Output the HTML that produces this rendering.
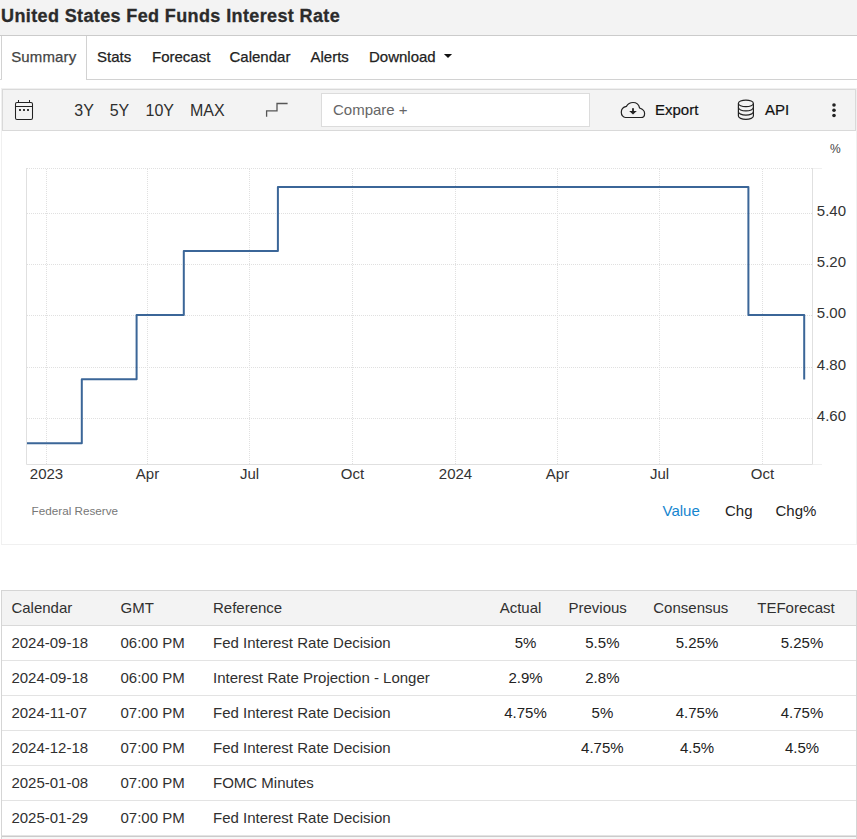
<!DOCTYPE html>
<html><head><meta charset="utf-8">
<style>
html,body{margin:0;padding:0;background:#fff;}
body{width:857px;height:839px;overflow:hidden;position:relative;font-family:"Liberation Sans",sans-serif;color:#222;}
.a{position:absolute;}
.t{position:absolute;white-space:nowrap;line-height:1;}
.f15{font-size:15px;}
.tab{-webkit-text-stroke:0.25px currentColor;}
.f14{font-size:14px;}
.f12{font-size:12px;}
.tb{color:#303030;}
#title{left:0;top:0;width:857px;height:35px;background:#f3f3f3;border-bottom:1px solid #cbcbcb;}
#tabline{left:86px;top:79px;width:771px;height:1px;background:#d2d2d2;}
#tabact{left:1px;top:36px;width:84px;height:43px;border-left:1px solid #d2d2d2;border-right:1px solid #d2d2d2;}
#cont{left:1px;top:88px;width:854px;height:455px;border:1px solid #f0f0f0;}
#tb{left:2px;top:89px;width:852px;height:40px;background:#f3f3f3;border:1px solid #d9d9d9;}
#inp{left:321px;top:93px;width:267px;height:32px;background:#fff;border:1px solid #dcdcdc;}
#tbl{left:1px;top:590px;width:854px;height:260px;border-left:1px solid #d5d5d5;border-right:1px solid #d5d5d5;border-top:1px solid #d5d5d5;}
.hd{left:2px;top:591px;width:854px;height:34px;background:#f3f3f3;}
.rl{position:absolute;left:2px;width:854px;height:1px;background:#e3e3e3;}
</style></head>
<body>
<div id="title" class="a"></div>
<div class="t" style="left:1px;top:6.7px;font-size:18px;font-weight:bold;color:#2b2b2b;letter-spacing:0.38px;-webkit-text-stroke:0.3px #2b2b2b;">United States Fed Funds Interest Rate</div>

<div id="tabact" class="a"></div>
<div id="tabline" class="a"></div>
<div class="a" style="left:0;top:79px;width:2px;height:1px;background:#d8d8d8"></div>
<div class="t f15 tab" style="left:11.2px;top:48.7px;color:#444;letter-spacing:0.15px;">Summary</div>
<div class="t f15 tab" style="left:97px;top:48.7px;">Stats</div>
<div class="t f15 tab" style="left:152px;top:48.7px;">Forecast</div>
<div class="t f15 tab" style="left:229.5px;top:48.7px;">Calendar</div>
<div class="t f15 tab" style="left:310.5px;top:48.7px;">Alerts</div>
<div class="t f15 tab" style="left:369px;top:48.7px;">Download</div>
<svg class="a" style="left:443px;top:53px" width="10" height="6"><path d="M0.9 0.9 H9.1 L5 5 Z" fill="#111"/></svg>

<div id="cont" class="a"></div>
<div id="tb" class="a"></div>
<!-- calendar icon -->
<svg class="a" style="left:12px;top:97px" width="24" height="26" viewBox="0 0 24 26">
 <rect x="3.5" y="5.5" width="17" height="17" rx="1.5" fill="none" stroke="#222" stroke-width="1.05"/>
 <line x1="3.5" y1="9.5" x2="20.5" y2="9.5" stroke="#222" stroke-width="1.05"/>
 <line x1="6.5" y1="3" x2="6.5" y2="5.5" stroke="#222" stroke-width="1.05"/>
 <line x1="17.5" y1="3" x2="17.5" y2="5.5" stroke="#222" stroke-width="1.05"/>
 <rect x="7.1" y="12.1" width="1.8" height="1.8" fill="#111"/>
 <rect x="11.1" y="12.1" width="1.8" height="1.8" fill="#111"/>
 <rect x="15.1" y="12.1" width="1.8" height="1.8" fill="#111"/>
</svg>
<div class="t" style="font-size:16px;left:54.1px;width:60px;text-align:center;top:103px;color:#2e2e2e;">3Y</div>
<div class="t" style="font-size:16px;left:89.5px;width:60px;text-align:center;top:103px;color:#2e2e2e;">5Y</div>
<div class="t" style="font-size:16px;left:129.8px;width:60px;text-align:center;top:103px;color:#2e2e2e;">10Y</div>
<div class="t" style="font-size:16px;left:177.3px;width:60px;text-align:center;top:103px;color:#2e2e2e;">MAX</div>
<svg class="a" style="left:260px;top:98px" width="32" height="24"><path d="M6.6 18.7 V12.9 H17 V5.5 H27.6" fill="none" stroke="#555" stroke-width="1.3"/></svg>
<div id="inp" class="a"></div>
<div class="t f15" style="left:333px;top:101.6px;color:#666;">Compare +</div>
<!-- cloud -->
<svg class="a" style="left:618px;top:98px" width="30" height="24" viewBox="0 0 30 24">
 <path d="M7.4 19.5 H23.1 C25.3 19.5 26.6 17.5 26.6 15.4 C26.6 13 25 11.2 21.6 10 C20.8 6.5 18.3 4.5 15 4.5 C11.8 4.5 9.6 6.3 8.4 8.4 C5.4 9 3.3 11.3 3.3 14.2 C3.3 17.2 5.2 19.5 7.4 19.5 Z" fill="none" stroke="#222" stroke-width="1.2"/>
 <rect x="14.1" y="10.2" width="1.8" height="3.6" fill="#222"/>
 <path d="M11.2 13.1 H18.8 L15 16.4 Z" fill="#222"/>
</svg>
<div class="t f15" style="left:655px;top:102px;color:#111;-webkit-text-stroke:0.2px #111;">Export</div>
<!-- db -->
<svg class="a" style="left:734px;top:97px" width="24" height="26" viewBox="0 0 24 26">
 <g fill="none" stroke="#222" stroke-width="1.2">
 <ellipse cx="11.9" cy="6.4" rx="7.5" ry="3.3"/>
 <path d="M4.4 6.4 V19 A7.5 3.3 0 0 0 19.4 19 V6.4"/>
 <path d="M4.4 10.6 A7.5 3.3 0 0 0 19.4 10.6"/>
 <path d="M4.4 14.8 A7.5 3.3 0 0 0 19.4 14.8"/>
 </g>
</svg>
<div class="t f15" style="left:765px;top:102px;color:#111;-webkit-text-stroke:0.2px #111;">API</div>
<svg class="a" style="left:829px;top:100px" width="10" height="20"><circle cx="5" cy="5" r="1.8" fill="#222"/><circle cx="5" cy="10.2" r="1.8" fill="#222"/><circle cx="5" cy="15.5" r="1.8" fill="#222"/></svg>

<!-- chart -->
<svg class="a" style="left:0;top:0" width="857" height="545">
 <g stroke="#e0e0e0" stroke-width="1" stroke-dasharray="1 1" fill="none">
  <path d="M27 168.5 H812 M27 213.5 H812 M27 264.5 H812 M27 315.5 H812 M27 367.5 H812 M27 418.5 H812"/>
  <path d="M46.5 169 V464 M147.5 169 V464 M249.5 169 V464 M352.5 169 V464 M455.5 169 V464 M557.5 169 V464 M659.5 169 V464 M762.5 169 V464"/>
 </g>
 <path d="M26.5 168 V464.5 H812.5 V168" fill="none" stroke="#e0e0e0" stroke-width="1"/>
 <path d="M813 168.5 H822 M813 464.5 H822" stroke="#f0f0f0" stroke-width="1"/>
 <path d="M27 443.3 H81.8 V379.2 H136.6 V315.1 H183.8 V250.9 H277.9 V187 H748.4 V315 H804.2 V379.4" fill="none" stroke="#3b6698" stroke-width="2" stroke-linejoin="round"/>
</svg>
<div class="t f12" style="left:830px;top:143px;color:#444;">%</div>
<div class="t f15" style="left:816.8px;top:203.2px;color:#333;">5.40</div>
<div class="t f15" style="left:816.8px;top:253.7px;color:#333;">5.20</div>
<div class="t f15" style="left:816.8px;top:304.9px;color:#333;">5.00</div>
<div class="t f15" style="left:816.8px;top:357.1px;color:#333;">4.80</div>
<div class="t f15" style="left:816.8px;top:408.4px;color:#333;">4.60</div>
<div class="t f15" style="left:-3.5px;width:100px;text-align:center;top:466px;color:#333;">2023</div>
<div class="t f15" style="left:97.5px;width:100px;text-align:center;top:466px;color:#333;">Apr</div>
<div class="t f15" style="left:199.5px;width:100px;text-align:center;top:466px;color:#333;">Jul</div>
<div class="t f15" style="left:302.5px;width:100px;text-align:center;top:466px;color:#333;">Oct</div>
<div class="t f15" style="left:405.5px;width:100px;text-align:center;top:466px;color:#333;">2024</div>
<div class="t f15" style="left:507.5px;width:100px;text-align:center;top:466px;color:#333;">Apr</div>
<div class="t f15" style="left:609.5px;width:100px;text-align:center;top:466px;color:#333;">Jul</div>
<div class="t f15" style="left:712.5px;width:100px;text-align:center;top:466px;color:#333;">Oct</div>
<div class="t" style="font-size:11.7px;left:31.6px;top:505.2px;color:#777;">Federal Reserve</div>
<div class="t f15" style="left:662.5px;top:503.3px;color:#1585cf;">Value</div>
<div class="t f15" style="left:725px;top:503.3px;color:#222;">Chg</div>
<div class="t f15" style="left:775.5px;top:503.3px;color:#222;">Chg%</div>

<!-- table -->
<div id="tbl" class="a"></div>
<div class="a hd"></div>
<div class="rl" style="top:625px;background:#d9d9d9"></div>
<div class="rl" style="top:660px"></div>
<div class="rl" style="top:695px"></div>
<div class="rl" style="top:730px"></div>
<div class="rl" style="top:765px"></div>
<div class="rl" style="top:800px"></div>
<div class="rl" style="top:835px"></div>
<div class="rl" style="top:836px;background:#cbcbcb"></div>
<div class="a" style="left:2px;top:837px;width:854px;height:2px;background:#f7f7f7"></div>

<div class="t f15 tb" style="left:11.4px;top:600.2px;">Calendar</div>
<div class="t f15 tb" style="left:120.5px;top:600.2px;">GMT</div>
<div class="t f15 tb" style="left:213px;top:600.2px;">Reference</div>
<div class="t f15 tb" style="left:460.5px;width:120px;text-align:center;top:600.2px;">Actual</div>
<div class="t f15 tb" style="left:537.7px;width:120px;text-align:center;top:600.2px;">Previous</div>
<div class="t f15 tb" style="left:630.8px;width:120px;text-align:center;top:600.2px;">Consensus</div>
<div class="t f15 tb" style="left:736.0px;width:120px;text-align:center;top:600.2px;">TEForecast</div>
<div class="t f15 tb" style="left:11.4px;top:635.2px;">2024-09-18</div>
<div class="t f15 tb" style="left:120.5px;top:635.2px;">06:00 PM</div>
<div class="t f15 tb" style="left:213px;top:635.2px;">Fed Interest Rate Decision</div>
<div class="t f15 c" style="left:465.5px;width:120px;text-align:center;top:635.2px;">5%</div>
<div class="t f15 c" style="left:542.4px;width:120px;text-align:center;top:635.2px;">5.5%</div>
<div class="t f15 c" style="left:637px;width:120px;text-align:center;top:635.2px;">5.25%</div>
<div class="t f15 c" style="left:742px;width:120px;text-align:center;top:635.2px;">5.25%</div>
<div class="t f15 tb" style="left:11.4px;top:670.2px;">2024-09-18</div>
<div class="t f15 tb" style="left:120.5px;top:670.2px;">06:00 PM</div>
<div class="t f15 tb" style="left:213px;top:670.2px;">Interest Rate Projection - Longer</div>
<div class="t f15 c" style="left:465.5px;width:120px;text-align:center;top:670.2px;">2.9%</div>
<div class="t f15 c" style="left:542.4px;width:120px;text-align:center;top:670.2px;">2.8%</div>
<div class="t f15 tb" style="left:11.4px;top:705.2px;">2024-11-07</div>
<div class="t f15 tb" style="left:120.5px;top:705.2px;">07:00 PM</div>
<div class="t f15 tb" style="left:213px;top:705.2px;">Fed Interest Rate Decision</div>
<div class="t f15 c" style="left:465.5px;width:120px;text-align:center;top:705.2px;">4.75%</div>
<div class="t f15 c" style="left:542.4px;width:120px;text-align:center;top:705.2px;">5%</div>
<div class="t f15 c" style="left:637px;width:120px;text-align:center;top:705.2px;">4.75%</div>
<div class="t f15 c" style="left:742px;width:120px;text-align:center;top:705.2px;">4.75%</div>
<div class="t f15 tb" style="left:11.4px;top:740.2px;">2024-12-18</div>
<div class="t f15 tb" style="left:120.5px;top:740.2px;">07:00 PM</div>
<div class="t f15 tb" style="left:213px;top:740.2px;">Fed Interest Rate Decision</div>
<div class="t f15 c" style="left:542.4px;width:120px;text-align:center;top:740.2px;">4.75%</div>
<div class="t f15 c" style="left:637px;width:120px;text-align:center;top:740.2px;">4.5%</div>
<div class="t f15 c" style="left:742px;width:120px;text-align:center;top:740.2px;">4.5%</div>
<div class="t f15 tb" style="left:11.4px;top:775.2px;">2025-01-08</div>
<div class="t f15 tb" style="left:120.5px;top:775.2px;">07:00 PM</div>
<div class="t f15 tb" style="left:213px;top:775.2px;">FOMC Minutes</div>
<div class="t f15 tb" style="left:11.4px;top:810.2px;">2025-01-29</div>
<div class="t f15 tb" style="left:120.5px;top:810.2px;">07:00 PM</div>
<div class="t f15 tb" style="left:213px;top:810.2px;">Fed Interest Rate Decision</div>
</body></html>
